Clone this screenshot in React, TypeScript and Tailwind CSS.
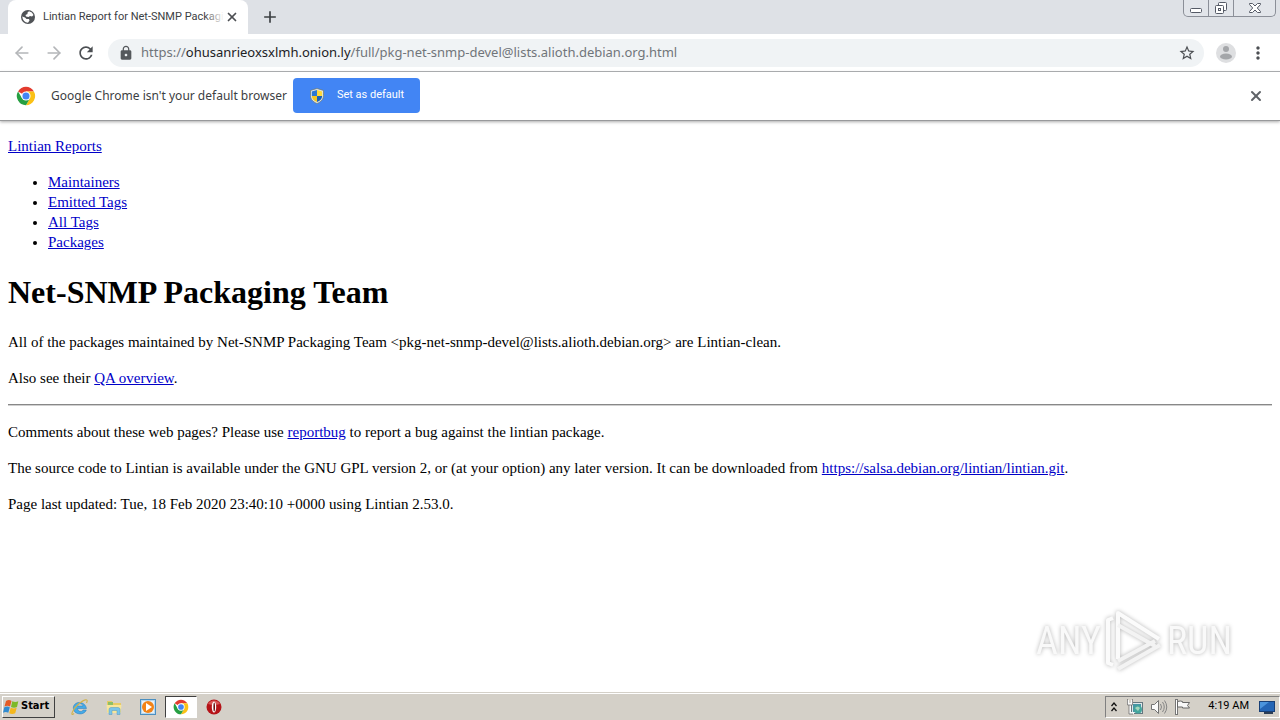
import type { ReactNode } from "react"
import { ArrowLeft, ArrowRight, X } from "lucide-react"
import { MdAdd, MdLock, MdMoreVert, MdRefresh, MdStarBorder } from "react-icons/md"

const navLinks = ["Maintainers", "Emitted Tags", "All Tags", "Packages"]

function ChromeLogo({ className }: { className: string }) {
  return (
    <svg viewBox="0 0 48 48" className={className} aria-hidden="true">
      <path d="M24 24 4.900 13A22 22 0 0 1 43 13H24Z" fill="#e33b2e" />
      <path d="M24 13h19a22 22 0 0 1-19 33l9.500-16.500Z" fill="#fbc116" />
      <path d="M4.900 13 14.500 29.500 33.500 29.500 24 46A22 22 0 0 1 4.900 13Z" fill="#269f42" />
      <circle cx="24" cy="24" r="11" fill="#fff" />
      <circle cx="24" cy="24" r="8.500" fill="#4285f4" />
    </svg>
  )
}

function GlobeIcon() {
  return (
    <svg viewBox="0 0 16 16" className="size-4 shrink-0" aria-hidden="true">
      <circle cx="8" cy="8" r="7" fill="#505357" />
      <path d="M9 2.200q3.500.8 4.500 3.800L12 7.500l-2-.5-1.500 1L6 7.500 5.500 6 7.500 5V3.500Z" fill="#fff" />
      <path d="M2.200 7.500 5 8.500l1.500 1.500H9l.5 1.500L8 13.800q-5-.3-5.800-6.300Z" fill="#fff" />
    </svg>
  )
}

function Shield() {
  return (
    <svg viewBox="0 0 16 16" className="size-4" aria-hidden="true">
      <path d="M8 0.500 14.500 2.500v5c0 4-3 6.500-6.500 8-3.500-1.500-6.500-4-6.500-8v-5Z" fill="#dfe7ee" stroke="#6b6d4c" strokeWidth="0.600" />
      <path d="M8 2v6H2.800V3.500Z" fill="#2b78d4" />
      <path d="M8 2v6h5.200V3.500Z" fill="#ffd83b" />
      <path d="M2.800 8H8v6C5 12.700 3 11 2.800 8Z" fill="#f5c61f" />
      <path d="M13.200 8H8v6c3-1.300 5-3 5.200-6Z" fill="#1c61b5" />
    </svg>
  )
}

function WindowButtons() {
  const button = "flex items-center justify-center border-r border-[#8b8f98] last:border-r-0"
  return (
    <div className="flex h-[17px] rounded-b-[5px] border border-t-0 border-[#8b8f98] bg-[#e2e5ea]">
      <button aria-label="Minimize" className={`${button} w-[25px]`}>
        <svg viewBox="0 0 14 16" className="h-4 w-3.5"><rect x="1.500" y="8.500" width="11" height="4" rx="1" fill="#fff" stroke="#555a66" /></svg>
      </button>
      <button aria-label="Restore" className={`${button} w-[25px]`}>
        <svg viewBox="0 0 16 16" className="size-4">
          <g fill="#fff" stroke="#555a66">
            <rect x="5.500" y="2.500" width="8" height="8" rx="1" />
            <rect x="2.500" y="5.500" width="8" height="8" rx="1" />
            <rect x="5.500" y="8.500" width="2" height="2" />
          </g>
        </svg>
      </button>
      <button aria-label="Close" className={`${button} w-[41px]`}>
        <svg viewBox="0 0 14 16" className="h-4 w-3.5">
          <path d="M1.500 3.500h3l2.500 2.500 2.500-2.500h3v1l-3.200 3.500 3.200 3.500v1h-3L7 10l-2.500 2.500h-3v-1L4.700 8 1.500 4.500Z" fill="#fff" stroke="#555a66" />
        </svg>
      </button>
    </div>
  )
}

function TabStrip() {
  return (
    <div className="flex h-[34px] items-start bg-[#dee1e6] pl-2 pr-1">
      <div className="flex h-[34px] w-60 items-center rounded-t-lg bg-white pl-3 pr-2">
        <GlobeIcon />
        <span className="relative ml-[7px] flex-1 whitespace-nowrap text-[11px] text-[#3c4043]">
          Lintian Report for Net-SNMP Packagi
          <span className="absolute inset-y-0 right-0 w-5 bg-linear-to-r from-transparent to-white" />
        </span>
        <button aria-label="Close tab" className="flex size-4 items-center justify-center">
          <X className="size-3.5 text-[#4c4f53]" strokeWidth={3} />
        </button>
      </div>
      <button aria-label="New tab" className="ml-3 mt-[7px]">
        <MdAdd className="size-5 text-[#3c4043]" />
      </button>
      <div className="ml-auto">
        <WindowButtons />
      </div>
    </div>
  )
}

function Toolbar() {
  return (
    <div className="flex h-[38px] items-center border-b border-[#a9abae] bg-white px-3">
      <button aria-label="Back"><ArrowLeft className="size-5 text-[#b4b6b9]" /></button>
      <button aria-label="Forward" className="ml-3"><ArrowRight className="size-5 text-[#b4b6b9]" /></button>
      <button aria-label="Reload" className="ml-3"><MdRefresh className="size-5 text-[#4c4f53]" /></button>
      <div className="ml-3 flex h-7 flex-1 items-center rounded-full bg-[#f0f3f5] pl-2.5 pr-2">
        <MdLock className="size-4 text-[#55585c]" />
        <div className="ml-[7px] flex-1 font-['Noto_Sans',sans-serif] text-[13px] text-[#70757a]">
          https://<span className="text-[#202124]">ohusanrieoxsxlmh.onion.ly</span>/full/pkg-net-snmp-devel@lists.alioth.debian.org.html
        </div>
        <button aria-label="Bookmark this page"><MdStarBorder className="size-[18px] text-[#4c4f53]" /></button>
      </div>
      <button aria-label="Profile" className="ml-3">
        <svg viewBox="0 0 20 20" className="size-5">
          <circle cx="10" cy="10" r="10" fill="#dedfe1" />
          <circle cx="10" cy="6" r="3" fill="#a4a6a9" />
          <ellipse cx="10" cy="13.500" rx="6" ry="3" fill="#a4a6a9" />
        </svg>
      </button>
      <button aria-label="Menu" className="ml-3"><MdMoreVert className="size-5 text-[#4c4f53]" /></button>
    </div>
  )
}

function InfoBar() {
  return (
    <div className="flex h-[49px] items-center border-b border-[#98999b] bg-white px-4 pb-px shadow-[0_1px_3px_#aaaaaa]">
      <ChromeLogo className="size-5" />
      <span className="ml-[15px] font-['Noto_Sans',sans-serif] text-xs text-[#3c4043]">Google Chrome isn't your default browser</span>
      <button className="ml-1.5 flex h-[35px] w-[127px] items-center rounded bg-[#4285f4] pl-4 text-[11px] text-white">
        <Shield />
        <span className="ml-3">Set as default</span>
      </button>
      <button aria-label="Dismiss" className="ml-auto"><X className="size-4 text-[#5f6368]" strokeWidth={3} /></button>
    </div>
  )
}

function PageLink({ children }: { children: ReactNode }) {
  return <a href="#" className="text-[#0000c8] underline">{children}</a>
}

function Report() {
  return (
    <main className="flex-1 px-2 py-[15px] font-['Liberation_Serif',serif] text-[15px] leading-5 text-black">
      <PageLink>Lintian Reports</PageLink>
      <ul className="my-4 list-disc pl-10">
        {navLinks.map((label) => (
          <li key={label}><PageLink>{label}</PageLink></li>
        ))}
      </ul>
      <h1 className="my-5 text-[32px] leading-10 font-bold">Net-SNMP Packaging Team</h1>
      <p className="my-4">
        All of the packages maintained by Net-SNMP Packaging Team &lt;pkg-net-snmp-devel@lists.alioth.debian.org&gt; are Lintian-clean.
      </p>
      <p className="my-4">Also see their <PageLink>QA overview</PageLink>.</p>
      <hr className="my-4 h-0.5 border-t border-b border-t-[#888888] border-b-[#d0d0d0]" />
      <p className="my-4">
        Comments about these web pages? Please use <PageLink>reportbug</PageLink> to report a bug against the lintian package.
      </p>
      <p className="my-4">
        The source code to Lintian is available under the GNU GPL version 2, or (at your option) any later version. It can be downloaded from{" "}
        <PageLink>https://salsa.debian.org/lintian/lintian.git</PageLink>.
      </p>
      <p className="my-4">Page last updated: Tue, 18 Feb 2020 23:40:10 +0000 using Lintian 2.53.0.</p>
    </main>
  )
}

function Watermark() {
  return (
    <div className="absolute right-12 bottom-12 flex items-center gap-1 font-['Roboto_Condensed','Open_Sans_Condensed',Roboto,sans-serif] text-[38px] leading-none text-[#f9f9f9] drop-shadow-[0_0_2px_#b4b4b4]">
      <span>ANY</span>
      <svg viewBox="0 0 58 62" className="h-[62px] w-[58px]" fill="none" strokeLinejoin="round">
        <path d="M8 8 3 10v43l5 2M13 49V3l41 26" stroke="#fbfbfb" strokeWidth="4" />
        <path d="M13 15l37 21M13 51l37-20M13 59l42-24" stroke="#f3f3f3" strokeWidth="4" />
      </svg>
      <span>RUN</span>
    </div>
  )
}

function WindowsFlag() {
  return (
    <svg viewBox="0 0 16 16" className="size-4" aria-hidden="true">
      <path d="M3 2q3-2 5.500 0L7 7.500q-2.500-1.500-5.500 0Z" fill="#e45b26" />
      <path d="M9.300 2.300q3 1.500 6 0L14 8q-3 1.500-6 0Z" fill="#7db928" />
      <path d="M1.300 8.300q3-1.500 5.500 0l-1.500 5.500q-2.500-1.500-5.300 0Z" fill="#318bd0" />
      <path d="M7.700 8.800q3 1.500 6 0l-1.500 5.500q-3 1.500-6 0Z" fill="#f4b71c" />
    </svg>
  )
}

function ExplorerIcon() {
  return (
    <svg viewBox="0 0 18 18" className="size-[18px]">
      <path d="M15.500 10.500H6.500C7 14 11 14.500 12 12h3.300c-2 6-13 5-13-2s11.500-8 13.200.5ZM6.500 8H12C11.500 5 7 5 6.500 8Z" fill="#45abe8" stroke="#2678bb" strokeWidth="0.500" />
      <path d="M3 15.500C-1 19 1 12 7 6.500S18 0 15.500 5" fill="none" stroke="#d2b34b" strokeWidth="1.200" />
    </svg>
  )
}

function FolderIcon() {
  return (
    <svg viewBox="0 0 18 18" className="size-[18px]">
      <path d="M2 3h5l1 2h8v9H2Z" fill="#e8cb65" />
      <path d="M3 4h5v3H3Z" fill="#8ebf66" />
      <path d="M1.500 7h15l-1 8H2.500Z" fill="#f8e69b" />
      <path d="M4 16.500v-5q0-2 2-2h7q2 0 2 2v5h-3v-4H7v4Z" fill="#79c4e9" stroke="#5499be" strokeWidth="0.500" />
    </svg>
  )
}

function PlayerIcon() {
  return (
    <svg viewBox="0 0 18 18" className="size-[18px]">
      <rect x="1.500" y="1.500" width="15" height="15" fill="#b6d7ef" stroke="#4b8fc0" />
      <rect x="3" y="3" width="12" height="12" fill="#e7f1f7" />
      <circle cx="9" cy="9" r="6" fill="#f28317" />
      <path d="m7 5 6 4-6 4Z" fill="#fff" />
    </svg>
  )
}

function OperaIcon() {
  return (
    <svg viewBox="0 0 18 18" className="size-[18px]">
      <circle cx="9" cy="9" r="7.500" fill="#b51318" />
      <path d="M3 6a7 7 0 0 1 12 0Q9 8 3 6Z" fill="#d85555" />
      <ellipse cx="9" cy="9" rx="2.200" ry="5.500" fill="#fff" />
      <ellipse cx="9.200" cy="9" rx="0.800" ry="4.500" fill="#6b0d10" />
    </svg>
  )
}

function Tray() {
  return (
    <div className="flex h-[22px] items-center border border-[#808080] border-r-white border-b-white px-1 text-[11px] text-black">
      <svg viewBox="0 0 8 12" className="h-3 w-2" fill="none" stroke="#111" strokeWidth="1.300"><path d="m1.500 5 2.500-3 2.500 3M1.500 10 4 7l2.500 3" /></svg>
      <svg viewBox="0 0 18 18" className="ml-2 size-[18px]">
        <rect x="5.500" y="4.500" width="11" height="11" fill="#e0e7ea" stroke="#65777f" />
        <rect x="7" y="6" width="8" height="8" fill="#4797a4" />
        <circle cx="12" cy="11.500" r="4" fill="#45a69d" />
        <path d="M9 10q3-3 5 0l-2 3Z" fill="#a5d6bd" />
        <path d="M2 2v4h4V2M4 6v9h4" fill="none" stroke="#f8f8f8" strokeWidth="2" />
        <path d="M1.500 1v6h5V1M3 7v9h4" fill="none" stroke="#666" strokeWidth="0.700" />
      </svg>
      <svg viewBox="0 0 18 18" className="ml-1.5 size-[18px]">
        <path d="M1.500 6.500h3l4-4v13l-4-4h-3Z" fill="#fafafa" stroke="#737373" />
        <path d="M10.500 6q2 3 0 6M12.500 4q3.500 5 0 10M14.500 2.500q4.500 6.500 0 13" fill="none" stroke="#858585" />
      </svg>
      <svg viewBox="0 0 18 18" className="ml-1.5 size-[18px]">
        <rect x="1.500" y="1.500" width="2" height="15" fill="#fff" stroke="#777" />
        <path d="M3.500 3.500q3-1 5 0v1h7l-2 3 2 2.500h-7v-1h-5Z" fill="#f8f8f8" stroke="#676767" />
      </svg>
      <span className="ml-4">4:19 AM</span>
      <svg viewBox="0 0 16 16" className="ml-2.5 size-4">
        <rect x="0.500" y="2.500" width="15" height="10" fill="#2465b5" stroke="#183f76" />
        <path d="M1 3h9L1 10Z" fill="#4b94dc" />
        <path d="M5 14h9" stroke="#2c3d55" strokeWidth="2" />
      </svg>
    </div>
  )
}

function Taskbar() {
  return (
    <footer className="flex h-7 items-center border-t border-[#d4d0c8] bg-[#d4d0c8] pl-0.5 shadow-[inset_0_1px_0_#ffffff]">
      <button className="flex h-[22px] w-[53px] items-center gap-0.5 border border-white border-r-[#404040] border-b-[#404040] font-['DejaVu_Sans_Condensed','DejaVu_Sans',sans-serif] text-[11px] font-bold text-black">
        <WindowsFlag />
        Start
      </button>
      <button aria-label="Internet Explorer" className="ml-4"><ExplorerIcon /></button>
      <button aria-label="File Explorer" className="ml-4"><FolderIcon /></button>
      <button aria-label="Media Player" className="ml-4"><PlayerIcon /></button>
      <button aria-label="Google Chrome" className="ml-2 flex h-[22px] w-8 items-center justify-center border border-[#404040] border-r-white border-b-white bg-white">
        <ChromeLogo className="size-4" />
      </button>
      <button aria-label="Opera" className="ml-2"><OperaIcon /></button>
      <div className="ml-auto">
        <Tray />
      </div>
    </footer>
  )
}

export default function App() {
  return (
    <div className="relative flex min-h-screen flex-col bg-white font-['Roboto',sans-serif]">
      <TabStrip />
      <Toolbar />
      <InfoBar />
      <Report />
      <Watermark />
      <Taskbar />
    </div>
  )
}
